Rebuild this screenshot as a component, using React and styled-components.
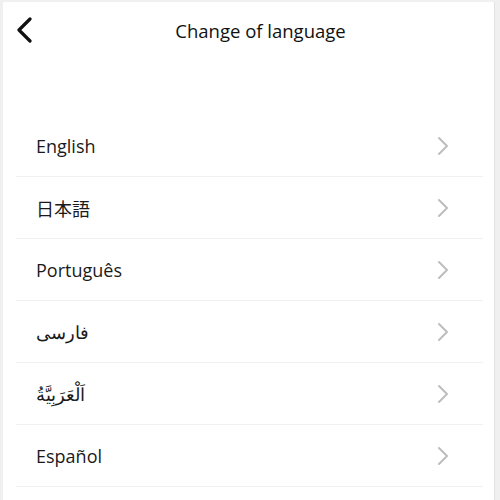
import React from 'react'
import styled, { createGlobalStyle } from 'styled-components'

const GlobalStyle = createGlobalStyle`
  html, body {
    margin: 0;
    padding: 0;
    background: #f0f0f0;
  }
  body {
    font-family: "Open Sans", "Noto Sans", "Noto Sans CJK JP", sans-serif;
    color: #1a1a1a;
  }
`

const languages = ['English', '日本語', 'Português', 'فارسی', 'اَلْعَرَبِيَّةُ', 'Español']

const Frame = styled.div`
  width: 500px;
  height: 500px;
  overflow: hidden;
  box-sizing: border-box;
  padding: 2px 5px 0 3px;
`

const Panel = styled.div`
  background: #fff;
  height: 100%;
  border-right: 1px solid #e2e2e2;
`

const Header = styled.div`
  display: flex;
  align-items: center;
  height: 56px;
  padding: 0 10px 0 12px;
`

const BackButton = styled.button`
  border: none;
  background: none;
  padding: 0;
  width: 22px;
  height: 28px;
  display: flex;
  align-items: center;
  cursor: pointer;
`

const Title = styled.h1`
  flex: 1;
  margin: 0;
  text-align: center;
  font-size: 18.5px;
  font-weight: 400;
  color: #111;
`

const List = styled.ul`
  list-style: none;
  margin: 57px 0 0;
  padding: 0 11px 0 13px;
`

const Row = styled.li`
  display: flex;
  align-items: center;
  justify-content: space-between;
  height: 61px;
  padding: 0 34px 0 20px;
  border-bottom: 1px solid #f0f0f0;
`

const Label = styled.span`
  font-size: 18px;
  color: #1a1a1a;
`

const Chevron = () => (
  <svg width="12" height="20" viewBox="0 0 12 20" fill="none">
    <path d="M2 2l8 8-8 8" stroke="#bdbdbd" strokeWidth="2" strokeLinecap="round" strokeLinejoin="round" />
  </svg>
)

export default function App() {
  return (
    <Frame>
      <GlobalStyle />
      <Panel>
        <Header>
          <BackButton>
            <svg width="18" height="26" viewBox="0 0 18 26" fill="none">
              <path d="M15 2L4 13l11 11" stroke="#111" strokeWidth="3.2" strokeLinecap="round" strokeLinejoin="round" />
            </svg>
          </BackButton>
          <Title>Change of language</Title>
        </Header>
        <List>
          {languages.map(lang => (
            <Row key={lang}>
              <Label>{lang}</Label>
              <Chevron />
            </Row>
          ))}
        </List>
      </Panel>
    </Frame>
  )
}
